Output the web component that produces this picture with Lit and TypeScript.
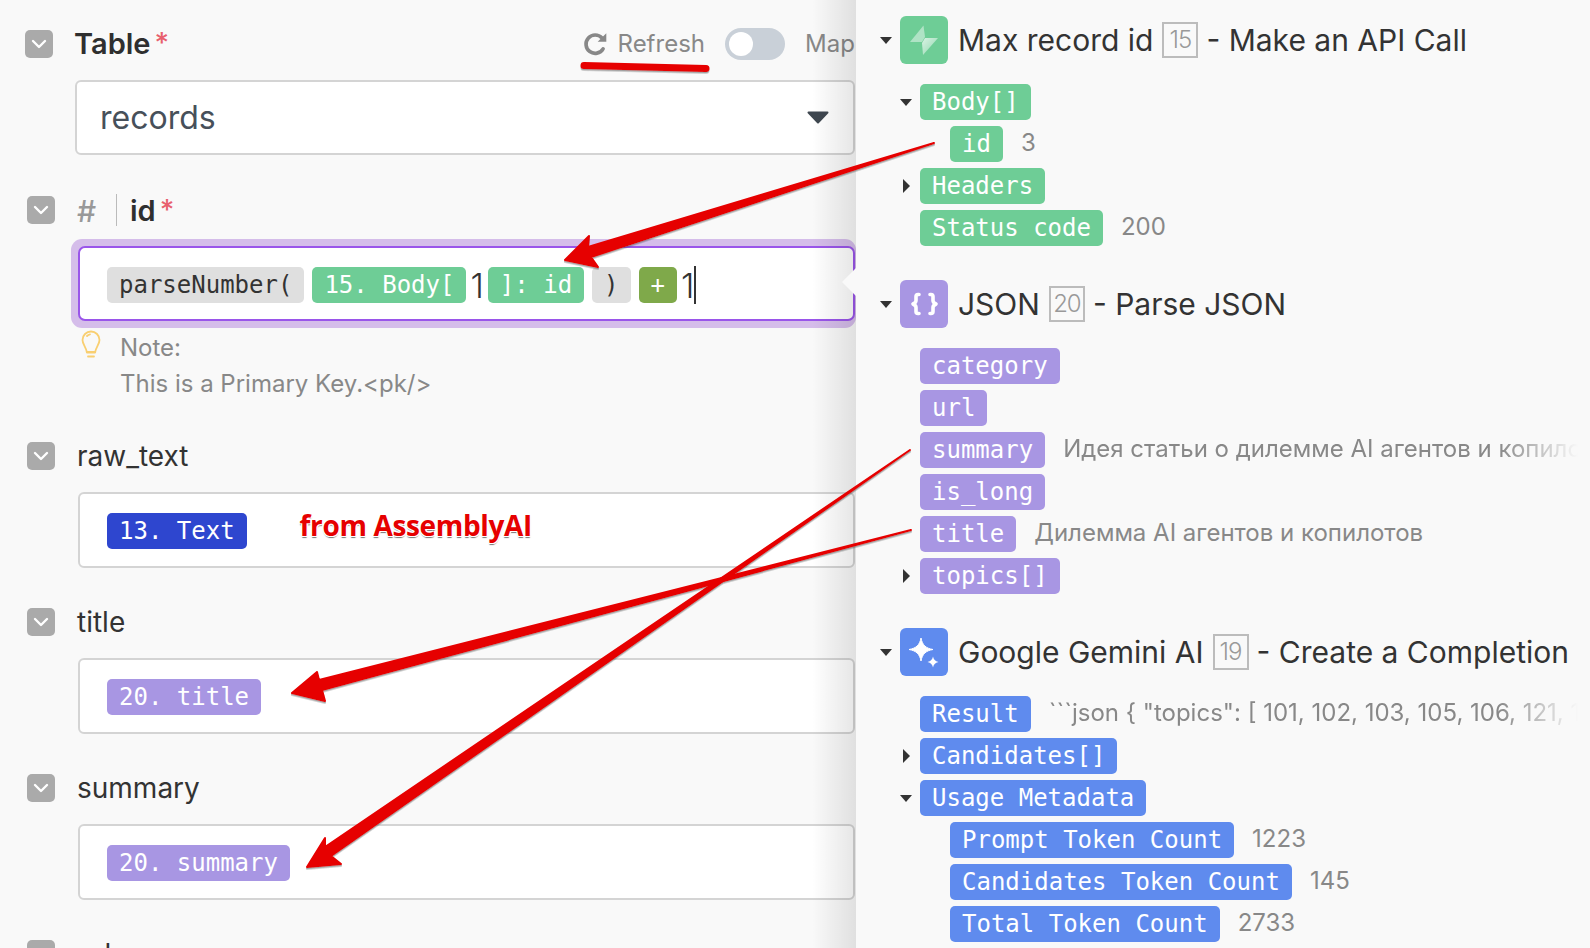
import { LitElement, html, css, svg } from "lit";
import { customElement } from "lit/decorators.js";

const chevron = html`<span class="check"><svg width="16" height="10" viewBox="0 0 16 10"><path d="M2 2l6 6 6-6" fill="none" stroke="#fff" stroke-width="2.4" stroke-linecap="round" stroke-linejoin="round"/></svg></span>`;

type Row = { label: string; indent?: number; twist?: "open" | "closed"; value?: string; fade?: boolean };

const boltIcon = html`<svg width="48" height="48" viewBox="0 0 48 48"><defs><linearGradient id="bg" x1="0" y1="0" x2="1" y2="1"><stop offset="0" stop-color="#fff" stop-opacity=".75"/><stop offset="1" stop-color="#fff" stop-opacity=".2"/></linearGradient></defs><path d="M23.5 9.5L10 26h12l3-5z" fill="#fff" fill-opacity=".45"/><path d="M23 39l15-17H25l-3 5z" fill="url(#bg)"/></svg>`;
const braceIcon = html`<svg width="48" height="48" viewBox="0 0 48 48"><path d="M19 14.500h-1c-1.500 0-2 1-2 2v4c0 1.500-.8 2.500-3 3.500 2.200 1 3 2 3 3.500v4c0 1 .5 2 2 2h1M30 14.500h1c1.500 0 2 1 2 2v4c0 1.500.8 2.500 3 3.500-2.200 1-3 2-3 3.500v4c0 1-.5 2-2 2h-1" fill="none" stroke="#fff" stroke-width="3.600" stroke-linecap="round" stroke-linejoin="round"/></svg>`;
const sparkIcon = html`<svg width="48" height="48" viewBox="0 0 48 48"><path d="M21 10c1.300 7 4.800 10.300 12 11.500-7.200 1.200-10.700 4.500-12 11.500-1.300-7-4.800-10.300-12-11.500C16.200 20.300 19.700 17 21 10z" fill="#fff" stroke="#fff" stroke-linejoin="round"/><path d="M33 28.500c.6 3 2.100 4.600 5.500 5.500-3.400.9-4.900 2.500-5.500 5.500-.6-3-2.100-4.600-5.500-5.500 3.400-.9 4.900-2.500 5.500-5.500z" fill="#fff"/></svg>`;

const arrows = svg`
  <defs><filter id="ds" x="-5%" y="-5%" width="110%" height="110%"><feDropShadow dx="0" dy="1.500" stdDeviation="0.700" flood-color="#444" flood-opacity=".5"/></filter></defs>
  <g fill="#e60000" filter="url(#ds)" stroke="#e60000" stroke-linejoin="round" stroke-width="2">
    <path d="M934 143 L588 247 L589 236 L565 260 L598 267 L591 257 Z"/>
    <path d="M911 530 L319 680 L317 672 L292 693 L325 701 L322 690 Z"/>
    <path d="M910 450 L325 847 L325 838 L307 867 L341 864 L331 856 Z"/>
    <path d="M584 65.500 L706 68.500" fill="none" stroke-width="7" stroke-linecap="round"/>
  </g>`;

@customElement("flow-chip")
class FlowChip extends LitElement {
  static properties = { tone: {} };
  declare tone: string;
  static styles = css`
    :host { display: inline-flex; }
    span {
      display: inline-block; height: 36px; padding: 0 12px; border-radius: 5px;
      font: 24px/37px "DejaVu Sans Mono", monospace; color: #fff; white-space: pre;
    }
    .green { background: #6ecd96; }
    .purple { background: #a896e3; }
    .blue { background: #5f8bee; }
    .navy { background: #2e46cf; }
    .olive { background: #7fa94a; }
    .grey { background: #dfdfdf; color: #333; }
  `;
  render() {
    return html`<span class=${this.tone}><slot></slot></span>`;
  }
}

@customElement("app-root")
export class AppRoot extends LitElement {
  static styles = css`
    :host { display: block; position: relative; width: 1590px; height: 948px; overflow: hidden; background: #f9f9f9; font-family: Inter, "Liberation Sans", sans-serif; color: #333; }
    .page { display: flex; height: 948px; }
    .left { width: 856px; flex: none; overflow: hidden; box-sizing: border-box; padding-top: 26px; }
    .right { flex: 1; min-width: 0; position: relative; padding: 16px 0 0 24px; box-sizing: border-box; }
    .right::before { content: ""; position: absolute; top: 0; bottom: 0; right: 100%; width: 44px; background: linear-gradient(to right, rgba(0,0,0,0), rgba(0,0,0,.1)); pointer-events: none; }
    .right::after { content: ""; position: absolute; right: 100%; top: 268px; border: 14px solid transparent; border-right-color: #f9f9f9; border-left-width: 0; }

    .head { display: flex; align-items: center; height: 36px; margin-left: 27px; font-size: 28px; }
    .head.first { margin-left: 25px; }
    .head.first .strong { margin-top: -2px; }
    .head.first .star { margin-top: -2px; }
    .check { width: 28px; height: 28px; border-radius: 5px; background: #aaa; display: flex; align-items: center; justify-content: center; flex: none; margin-right: 22px; }
    .head.first .check { margin-right: 21px; }
    .strong { font-weight: 600; color: #2f2f2f; font-size: 29px; }
    .star { color: #e8606e; margin-left: 4px; font-weight: 500; }
    .hash { color: #999; font-weight: 500; font-size: 30px; width: 40px; border-right: 1px solid #bbb; height: 32px; line-height: 34px; margin-right: 13px; box-sizing: border-box; }
    .tools { margin-left: auto; display: flex; align-items: center; color: #888; font-size: 24px; white-space: nowrap; margin-top: -2px; }
    .tools svg { margin-right: 9px; margin-top: 2px; }
    .toggle { width: 60px; height: 32px; border-radius: 16px; background: #c9d0d8; margin: 2px 20px 0; position: relative; flex: none; }
    .toggle::after { content: ""; position: absolute; left: 4px; top: 4px; width: 24px; height: 24px; border-radius: 50%; background: #fff; }
    .map { width: 51px; overflow: hidden; }

    .select { margin-left: 75px; box-sizing: border-box; border: 2px solid #d4d4d4; border-radius: 6px; background: #fff; display: flex; align-items: center; height: 75px; width: 780px; margin-top: 18px; margin-bottom: 37px; padding: 0 24px 0 23px; justify-content: space-between; font-size: 32px; color: #47505a; }
    .input { margin-left: 78px; box-sizing: border-box; width: 777px; height: 76px; padding: 1px 0 0 27px; margin-top: 18px; display: flex; align-items: center; gap: 8px; border: 2px solid #d4d4d4; border-radius: 6px; background: #fff; }
    .glow { margin: 11px 0 0 71px; width: 785px; height: 89px; box-sizing: border-box; padding: 7px 1px 7px 7px; background: #d5bdea; border-radius: 11px; }
    .glow .input { margin: 0; height: 75px; border-color: #9a55ea; padding-top: 3px; border-radius: 7px; }
    .plain { font-size: 34px; color: #333; font-weight: 300; margin: 0 -4px; }
    .caret { display: inline-block; width: 1.500px; height: 38px; background: #333; margin-left: -4px; }

    .note { margin-left: 81px; display: flex; font-size: 24px; line-height: 36px; color: #888; height: 110px; }
    .note svg { margin-top: 2px; flex: none; margin-right: 19px; }
    .note div { padding-top: 2px; }
    .field { margin-bottom: 36px; }
    .field .head { font-size: 28px; }
    .annot { margin-left: 45px; font: 700 28px "Open Sans", sans-serif; letter-spacing: -.35px; color: #e60000; text-shadow: 1px 1px 0 #fff, -1px -1px 0 #fff, 1px -1px 0 #fff, -1px 1px 0 #fff, 0 2px 1px #777; margin-top: -12px; }

    .section { margin-bottom: 34px; }
    .title { display: flex; align-items: center; height: 48px; font-size: 30px; white-space: nowrap; margin-bottom: 20px; color: #333; }
    .icon { width: 48px; height: 48px; border-radius: 6px; flex: none; margin-left: 8px; margin-right: 10px; }
    .badge { box-sizing: border-box; display: inline-block; width: 36px; height: 36px; border: 2px solid #bcbcbc; margin: 0 8px 0 9px; font-size: 24px; line-height: 32px; text-align: center; color: #999; font-weight: 300; letter-spacing: -1px; }
    .rows { display: flex; flex-direction: column; gap: 6px; }
    .row { display: flex; align-items: center; height: 36px; position: relative; padding-left: var(--pad, 40px); white-space: nowrap; }
    .val { margin-left: 18px; font-size: 24px; color: #888; margin-top: -3px; }
    .val.fade { flex: 1; min-width: 0; margin-right: 12px; overflow: hidden; -webkit-mask-image: linear-gradient(to left, transparent, #000 80px); mask-image: linear-gradient(to left, transparent, #000 80px); }
    .tri { position: absolute; width: 0; height: 0; }
    .tri.open { border: 6px solid transparent; border-top: 7px solid #333; border-bottom: 0; }
    .tri.closed { border: 7px solid transparent; border-left: 7px solid #333; border-right: 0; }
    .title .tri { position: static; }
    .overlay { position: absolute; inset: 0; width: 1590px; height: 948px; pointer-events: none; }
  `;

  tree(tone: string, rows: Row[]) {
    return html`<div class="rows">${rows.map((r) => html`
      <div class="row" style="--pad:${r.indent ? 70 : 40}px">
        ${r.twist ? html`<i class="tri ${r.twist}" style="left:${r.twist === "open" ? 20 : 23}px"></i>` : ""}
        <flow-chip tone=${tone}>${r.label}</flow-chip>
        ${r.value ? html`<span class="val ${r.fade ? "fade" : ""}">${r.value}</span>` : ""}
      </div>`)}</div>`;
  }

  field(label: string, chip: string, tone: string, extra: unknown = "") {
    return html`<div class="field">
      <div class="head">${chevron}<span>${label}</span></div>
      <div class="input"><flow-chip tone=${tone}>${chip}</flow-chip>${extra}</div>
    </div>`;
  }

  render() {
    return html`
      <div class="page">
        <div class="left">
          <div class="head first">
            ${chevron}<span class="strong">Table</span><span class="star">*</span>
            <div class="tools">
              <svg width="28" height="28" viewBox="0 0 26 26"><path d="M20.500 17.500A8.500 8.500 0 1 1 19.500 7.500" fill="none" stroke="#888" stroke-width="3.400" stroke-linecap="round"/><path d="M23.500 3v8h-8z" fill="#888"/></svg>
              <span>Refresh</span><span class="toggle"></span><span class="map">Map</span>
            </div>
          </div>
          <div class="select"><span>records</span>
            <svg width="22" height="13" viewBox="0 0 22 13"><path d="M1.500 1.500h19l-9.500 10z" fill="#3f4750" stroke="#3f4750" stroke-width="2" stroke-linejoin="round"/></svg>
          </div>
          <div class="head">${chevron}<span class="hash">#</span><span class="strong">id</span><span class="star">*</span></div>
          <div class="glow">
            <div class="input">
              <flow-chip tone="grey">parseNumber(</flow-chip>
              <flow-chip tone="green">15. Body[</flow-chip>
              <span class="plain">1</span>
              <flow-chip tone="green">]: id</flow-chip>
              <flow-chip tone="grey">)</flow-chip>
              <flow-chip tone="olive">+</flow-chip>
              <span class="plain">1</span><span class="caret"></span>
            </div>
          </div>
          <div class="note">
            <svg width="20" height="29" viewBox="0 0 20 29"><path d="M10 1.500a8.500 8.500 0 0 0-8.500 8.500c0 4 3.500 7 4.300 12h8.400c.8-5 4.300-8 4.300-12A8.500 8.500 0 0 0 10 1.500zM6 22.500h8M7 26.500h6M6 6c1-1 2-1.500 3-1.700" fill="none" stroke="#f9cf71" stroke-width="1.800" stroke-linecap="round"/></svg>
            <div>Note:<br />This is a Primary Key.&lt;pk/&gt;</div>
          </div>
          ${this.field("raw_text", "13. Text", "navy", html`<span class="annot">from AssemblyAI</span>`)}
          ${this.field("title", "20. title", "purple")}
          ${this.field("summary", "20. summary", "purple")}
          <div class="field"><div class="head">${chevron}<span>url</span></div></div>
        </div>
        <div class="right">
          <div class="section">
            <div class="title"><i class="tri open"></i><span class="icon" style="background:#6ecd96">${boltIcon}</span>Max record id<span class="badge">15</span>- Make an API Call</div>
            ${this.tree("green", [
              { label: "Body[]", twist: "open" },
              { label: "id", indent: 1, value: "3" },
              { label: "Headers", twist: "closed" },
              { label: "Status code", value: "200" },
            ])}
          </div>
          <div class="section">
            <div class="title"><i class="tri open"></i><span class="icon" style="background:#a896e3">${braceIcon}</span>JSON<span class="badge">20</span>- Parse JSON</div>
            ${this.tree("purple", [
              { label: "category" },
              { label: "url" },
              { label: "summary", value: "Идея статьи о дилемме AI агентов и копилотов, которые помогают людям", fade: true },
              { label: "is_long" },
              { label: "title", value: "Дилемма AI агентов и копилотов" },
              { label: "topics[]", twist: "closed" },
            ])}
          </div>
          <div class="section">
            <div class="title"><i class="tri open"></i><span class="icon" style="background:#5f8bee">${sparkIcon}</span>Google Gemini AI<span class="badge">19</span>- Create a Completion</div>
            ${this.tree("blue", [
              { label: "Result", value: '\`\`\`json { "topics": [ 101, 102, 103, 105, 106, 121, 122, 130, 140', fade: true },
              { label: "Candidates[]", twist: "closed" },
              { label: "Usage Metadata", twist: "open" },
              { label: "Prompt Token Count", indent: 1, value: "1223" },
              { label: "Candidates Token Count", indent: 1, value: "145" },
              { label: "Total Token Count", indent: 1, value: "2733" },
            ])}
          </div>
        </div>
      </div>
      <svg class="overlay" viewBox="0 0 1590 948">${arrows}</svg>
    `;
  }
}
export { FlowChip };
